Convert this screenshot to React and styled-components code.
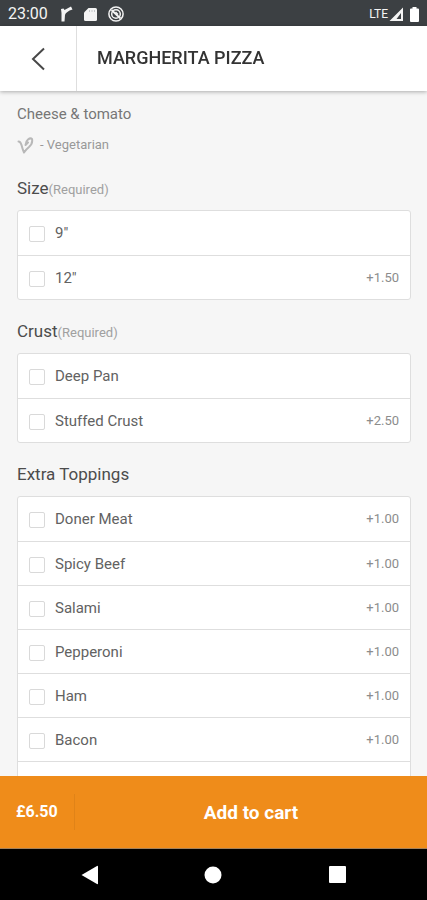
import React from "react";
import styled, { createGlobalStyle } from "styled-components";

const GlobalStyle = createGlobalStyle`
  * { box-sizing: border-box; }
  body { margin: 0; background: #f6f6f6; }
  body, button, input { font-family: Roboto, "Liberation Sans", sans-serif; }
  button { border: 0; padding: 0; margin: 0; background: none; color: inherit; cursor: pointer; }
`;

const Screen = styled.div`
  display: flex;
  flex-direction: column;
  height: 100vh;
  overflow: hidden;
  color: #4c4c4c;
`;

const StatusBar = styled.div`
  flex: none;
  display: flex;
  align-items: center;
  justify-content: space-between;
  height: 26px;
  padding: 2px 8px 0;
  background: #3c4043;
  color: #f4f4f4;
`;

const StatusGroup = styled.div`
  display: flex;
  align-items: center;
  gap: ${(p) => p.$gap}px;
`;

const Clock = styled.span`
  font-size: 16px;
  line-height: 20px;
`;

const Network = styled.span`
  font-size: 12px;
  line-height: 20px;
`;

const Header = styled.header`
  flex: none;
  display: flex;
  height: 65px;
  background: #fff;
  box-shadow: 0 1px 4px rgba(0, 0, 0, 0.3);
  z-index: 1;
`;

const BackButton = styled.button`
  display: flex;
  align-items: center;
  justify-content: center;
  width: 77px;
  border-right: 1px solid #dedede;
`;

const Title = styled.h1`
  margin: 0;
  padding-left: 20px;
  font-size: 18px;
  font-weight: 500;
  line-height: 64px;
  color: #333;
`;

const Content = styled.main`
  flex: 1;
  min-height: 0;
  overflow-y: auto;
  scrollbar-width: none;
  padding: 13px 16px 0 17px;
  background: #f6f6f6;
`;

const Description = styled.p`
  margin: 0 0 11px;
  font-size: 15px;
  line-height: 20px;
  color: #777;
`;

const DietNote = styled.p`
  display: flex;
  align-items: center;
  gap: 6px;
  margin: 0 0 23px;
  font-size: 13px;
  line-height: 20px;
  color: #999;
`;

const Group = styled.fieldset`
  margin: 0;
  padding: 0;
  border: 0;
  min-width: 0;
`;

const GroupTitle = styled.legend`
  padding: 0 0 12px;
  font-size: 17px;
  line-height: 20px;
  color: #4c4c4c;
`;

const Required = styled.span`
  font-size: 13px;
  line-height: 1;
  color: #a0a0a0;
`;

const Options = styled.div`
  margin-bottom: 21px;
  border: 1px solid #dedede;
  border-radius: 3px;
  background: #fff;
`;

const Option = styled.label`
  display: flex;
  align-items: center;
  height: 44px;
  padding: 0 11px;
  font-size: 15px;
  line-height: 20px;
  color: #626262;
  cursor: pointer;

  & + & { border-top: 1px solid #dedede; }
`;

const EmptyRow = styled.div`
  height: 44px;
  border-top: 1px solid #dedede;
`;

const Check = styled.input`
  appearance: none;
  flex: none;
  width: 16px;
  height: 16px;
  margin: 2px 10px 0 0;
  border: 1px solid #d9d9d9;
  border-radius: 2px;
  background: #fff;

  &:checked {
    border-color: #ef8c1a;
    background: #ef8c1a;
  }
`;

const Price = styled.span`
  margin-left: auto;
  font-size: 13px;
  color: #8c8c8c;
`;

const CartBar = styled.footer`
  flex: none;
  display: flex;
  align-items: center;
  height: 73px;
  background: #ef8c1a;
  border-bottom: 1px solid #a5825a;
  color: #fff;
`;

const Total = styled.div`
  width: 75px;
  padding-left: 16px;
  border-right: 1px solid #e08318;
  font-size: 16px;
  font-weight: 700;
  line-height: 36px;
`;

const AddButton = styled.button`
  flex: 1;
  align-self: stretch;
  font-size: 19px;
  font-weight: 700;
`;

const NavBar = styled.nav`
  flex: none;
  display: grid;
  grid-template-columns: repeat(3, 1fr);
  height: 51px;
  padding: 0 28px;
  background: #000;
`;

const NavButton = styled.button`
  display: flex;
  align-items: center;
  justify-content: center;
`;

const groups = [
  { title: "Size", required: true, options: [['9"'], ['12"', "+1.50"]] },
  { title: "Crust", required: true, options: [["Deep Pan"], ["Stuffed Crust", "+2.50"]] },
  {
    title: "Extra Toppings",
    options: [
      ["Doner Meat", "+1.00"],
      ["Spicy Beef", "+1.00"],
      ["Salami", "+1.00"],
      ["Pepperoni", "+1.00"],
      ["Ham", "+1.00"],
      ["Bacon", "+1.00"],
    ],
    trailingRow: true,
  },
];

function OptionGroup({ title, required, options, trailingRow }) {
  return (
    <Group>
      <GroupTitle>
        {title}
        {required && <Required>(Required)</Required>}
      </GroupTitle>
      <Options>
        {options.map(([name, price]) => (
          <Option key={name}>
            <Check type="checkbox" />
            {name}
            {price && <Price>{price}</Price>}
          </Option>
        ))}
        {trailingRow && <EmptyRow />}
      </Options>
    </Group>
  );
}

export default function App() {
  return (
    <Screen>
      <GlobalStyle />
      <StatusBar>
        <StatusGroup $gap={11}>
          <Clock>23:00</Clock>
          <svg width="14" height="16" viewBox="0 0 14 16" fill="#f4f4f4" aria-hidden="true">
            <path d="M2 3 L4.500 2.500 L5.500 4 L12 0.500 L13.500 3.500 Q7 5.500 6 9 L5.500 15.500 H2.500 V7 Z" />
          </svg>
          <svg width="13" height="15" viewBox="0 0 13 15" aria-hidden="true">
            <path d="M4.500 1 H11.500 Q13 1 13 2.500 V12.500 Q13 14 11.500 14 H1.500 Q0 14 0 12.500 V5.500 Z" fill="#f4f4f4" />
            <path d="M5.500 3 V5 M8 3 V5 M10.500 3 V5" stroke="#c5c8ca" strokeWidth="1" />
          </svg>
          <svg width="16" height="16" viewBox="0 0 16 16" fill="none" stroke="#f4f4f4" aria-hidden="true">
            <circle cx="8" cy="8" r="7.100" strokeWidth="1.500" />
            <circle cx="8" cy="8" r="4.300" strokeWidth="1.500" />
            <path d="M3.500 4 L12.500 12.500" strokeWidth="1.800" />
            <path d="M7.500 6 L10 8.500" strokeWidth="1.500" />
          </svg>
        </StatusGroup>
        <StatusGroup $gap={1}>
          <Network>LTE</Network>
          <StatusGroup $gap={6}>
            <svg width="15" height="15" viewBox="0 0 15 15" aria-hidden="true">
              <path d="M14 0.500 V14 H0.500 Z M12 6 V12 H7.500 Z" fill="#f4f4f4" fillRule="evenodd" />
            </svg>
            <svg width="9" height="15" viewBox="0 0 9 15" aria-hidden="true">
              <path d="M2.500 0 H6.500 V1.500 H8 Q9 1.500 9 2.500 V14 Q9 15 8 15 H1 Q0 15 0 14 V2.500 Q0 1.500 1 1.500 H2.500 Z" fill="#fff" />
            </svg>
          </StatusGroup>
        </StatusGroup>
      </StatusBar>

      <Header>
        <BackButton aria-label="Back">
          <svg width="14" height="24" viewBox="0 0 14 24" fill="none" stroke="#484848" strokeWidth="2" aria-hidden="true">
            <path d="M13 1.500 L2 12 L13 22.500" />
          </svg>
        </BackButton>
        <Title>MARGHERITA PIZZA</Title>
      </Header>

      <Content>
        <Description>Cheese &amp; tomato</Description>
        <DietNote>
          <svg width="17" height="18" viewBox="0 0 17 18" fill="none" stroke="#b8b8b8" strokeWidth="2" strokeLinecap="round" strokeLinejoin="round" aria-hidden="true">
            <path d="M1.500 5.500 Q3.500 5.500 4.500 9 Q5.500 13 7 16.500 Q9 13.500 12 11 Q16 7.500 15 3 Q13.500 1.500 11 3.500 Q8.500 5.500 8.500 9 Q10 7.500 11 6.500" />
          </svg>
          - Vegetarian
        </DietNote>
        {groups.map((group) => (
          <OptionGroup key={group.title} {...group} />
        ))}
      </Content>

      <CartBar>
        <Total>£6.50</Total>
        <AddButton>Add to cart</AddButton>
      </CartBar>

      <NavBar>
        <NavButton aria-label="System back">
          <svg width="18" height="20" viewBox="0 0 18 20" aria-hidden="true">
            <path d="M0.500 10 L16 1 Q17 0.500 17 1.500 V18.500 Q17 19.500 16 19 Z" fill="#fff" />
          </svg>
        </NavButton>
        <NavButton aria-label="Home">
          <svg width="18" height="18" viewBox="0 0 18 18" aria-hidden="true">
            <circle cx="9" cy="9" r="8.500" fill="#fff" />
          </svg>
        </NavButton>
        <NavButton aria-label="Recent apps">
          <svg width="17" height="17" viewBox="0 0 17 17" aria-hidden="true">
            <rect width="17" height="17" rx="1" fill="#fff" />
          </svg>
        </NavButton>
      </NavBar>
    </Screen>
  );
}
